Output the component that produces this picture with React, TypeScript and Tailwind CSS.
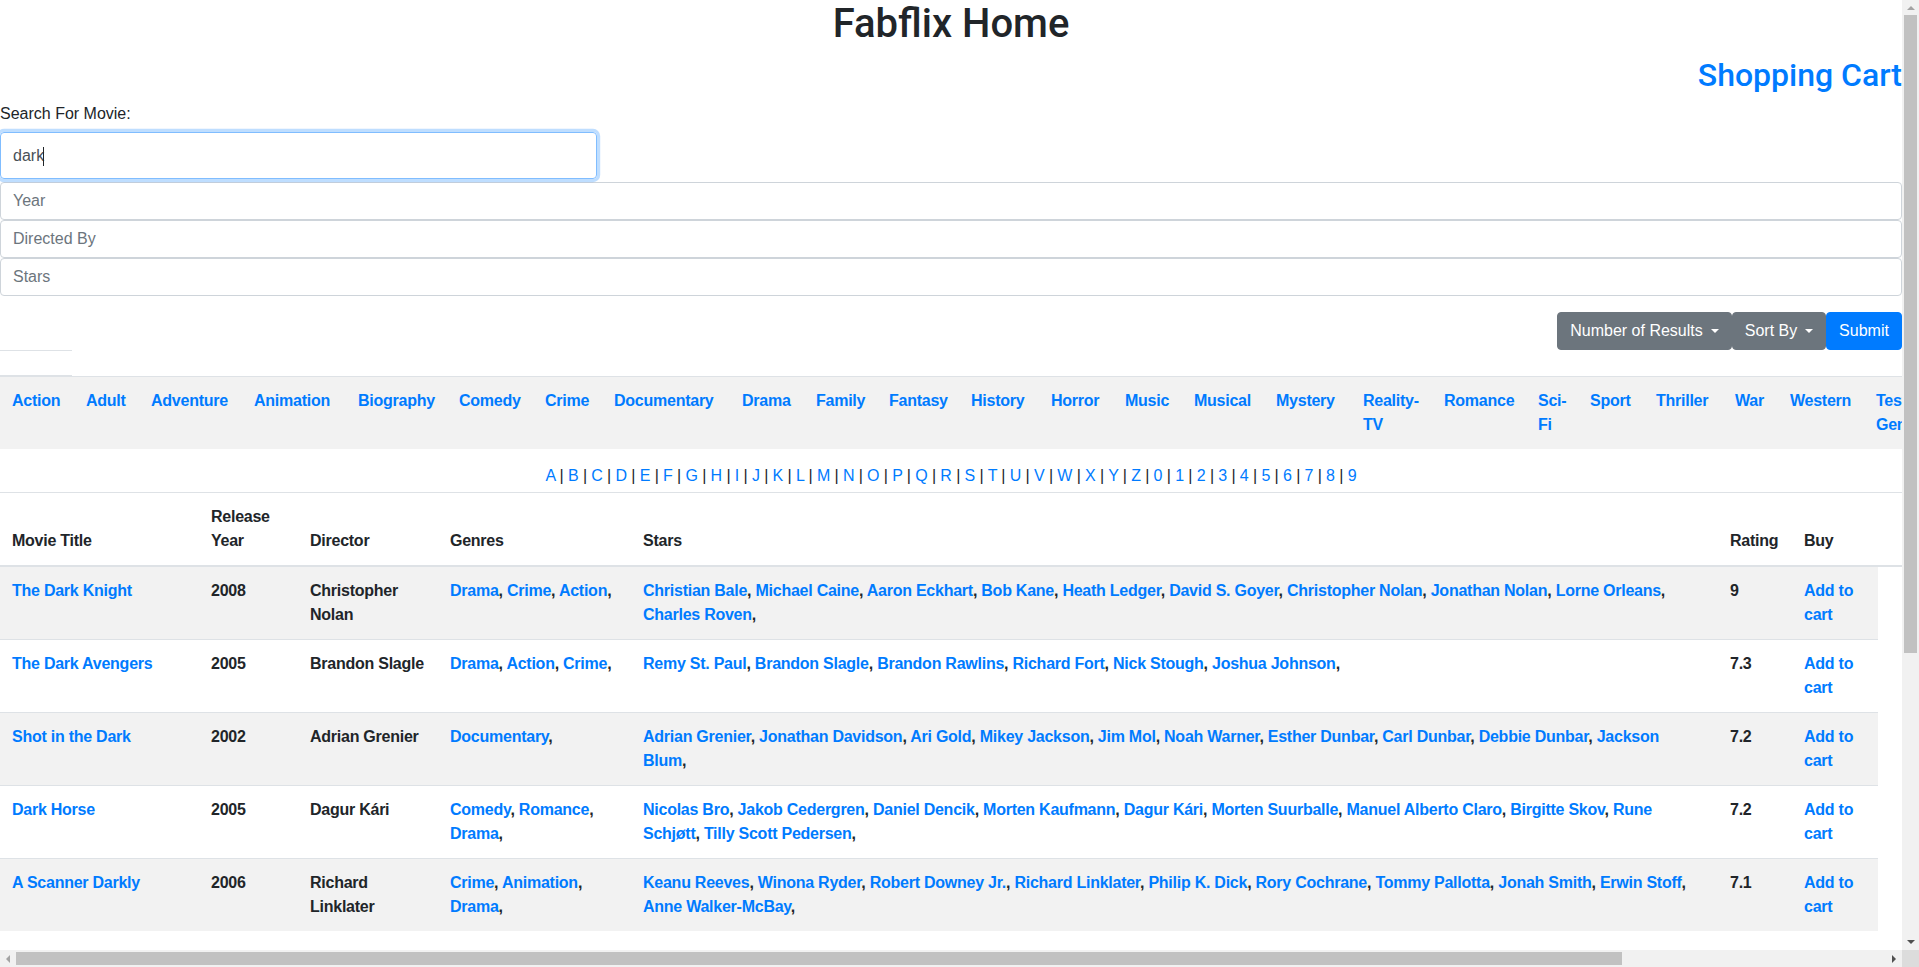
import { Fragment } from "react";

// column widths of the genre strip, taken from the reference layout
const genres = [
  { name: "Action", w: "w-[74px]" },
  { name: "Adult", w: "w-[65px]" },
  { name: "Adventure", w: "w-[103px]" },
  { name: "Animation", w: "w-[104px]" },
  { name: "Biography", w: "w-[101px]" },
  { name: "Comedy", w: "w-[86px]" },
  { name: "Crime", w: "w-[69px]" },
  { name: "Documentary", w: "w-[128px]" },
  { name: "Drama", w: "w-[74px]" },
  { name: "Family", w: "w-[73px]" },
  { name: "Fantasy", w: "w-[82px]" },
  { name: "History", w: "w-[80px]" },
  { name: "Horror", w: "w-[74px]" },
  { name: "Music", w: "w-[69px]" },
  { name: "Musical", w: "w-[82px]" },
  { name: "Mystery", w: "w-[87px]" },
  { name: "Reality-TV", w: "w-[81px]" },
  { name: "Romance", w: "w-[94px]" },
  { name: "Sci-Fi", w: "w-[52px]" },
  { name: "Sport", w: "w-[66px]" },
  { name: "Thriller", w: "w-[79px]" },
  { name: "War", w: "w-[55px]" },
  { name: "Western", w: "w-[86px]" },
  { name: "Test Genre", w: "w-[72px]" },
];

const initials = "ABCDEFGHIJKLMNOPQRSTUVWXYZ0123456789".split("");

type Movie = {
  title: string;
  year: string;
  director: string;
  genres: string[];
  stars: string[];
  rating: string;
};

const movies: Movie[] = [
  {
    title: "The Dark Knight",
    year: "2008",
    director: "Christopher Nolan",
    genres: ["Drama", "Crime", "Action"],
    stars: [
      "Christian Bale",
      "Michael Caine",
      "Aaron Eckhart",
      "Bob Kane",
      "Heath Ledger",
      "David S. Goyer",
      "Christopher Nolan",
      "Jonathan Nolan",
      "Lorne Orleans",
      "Charles Roven",
    ],
    rating: "9",
  },
  {
    title: "The Dark Avengers",
    year: "2005",
    director: "Brandon Slagle",
    genres: ["Drama", "Action", "Crime"],
    stars: ["Remy St. Paul", "Brandon Slagle", "Brandon Rawlins", "Richard Fort", "Nick Stough", "Joshua Johnson"],
    rating: "7.3",
  },
  {
    title: "Shot in the Dark",
    year: "2002",
    director: "Adrian Grenier",
    genres: ["Documentary"],
    stars: [
      "Adrian Grenier",
      "Jonathan Davidson",
      "Ari Gold",
      "Mikey Jackson",
      "Jim Mol",
      "Noah Warner",
      "Esther Dunbar",
      "Carl Dunbar",
      "Debbie Dunbar",
      "Jackson Blum",
    ],
    rating: "7.2",
  },
  {
    title: "Dark Horse",
    year: "2005",
    director: "Dagur Kári",
    genres: ["Comedy", "Romance", "Drama"],
    stars: [
      "Nicolas Bro",
      "Jakob Cedergren",
      "Daniel Dencik",
      "Morten Kaufmann",
      "Dagur Kári",
      "Morten Suurballe",
      "Manuel Alberto Claro",
      "Birgitte Skov",
      "Rune Schjøtt",
      "Tilly Scott Pedersen",
    ],
    rating: "7.2",
  },
  {
    title: "A Scanner Darkly",
    year: "2006",
    director: "Richard Linklater",
    genres: ["Crime", "Animation", "Drama"],
    stars: [
      "Keanu Reeves",
      "Winona Ryder",
      "Robert Downey Jr.",
      "Richard Linklater",
      "Philip K. Dick",
      "Rory Cochrane",
      "Tommy Pallotta",
      "Jonah Smith",
      "Erwin Stoff",
      "Anne Walker-McBay",
    ],
    rating: "7.1",
  },
];

function LinkList({ items }: { items: string[] }) {
  return (
    <>
      {items.map((item) => (
        <Fragment key={item}>
          <a href="#" className="text-[#007bff]">
            {item}
          </a>
          ,{" "}
        </Fragment>
      ))}
    </>
  );
}

function Caret() {
  return <span className="ml-2 inline-block border-x-[0.3em] border-t-[0.3em] border-b-0 border-x-transparent border-t-white" />;
}

// window scrollbars as they appear in the screenshot (classic Windows style)
function VerticalScrollbar() {
  return (
    <div className="flex flex-col bg-[#f1f1f1]">
      <div className="flex h-[15px] items-center justify-center">
        <span className="border-x-[4px] border-b-[4px] border-t-0 border-x-transparent border-b-[#a3a3a3]" />
      </div>
      <div className="mx-[2px] h-[638px] bg-[#c1c1c1]" />
      <div className="mt-auto flex h-[17px] items-center justify-center">
        <span className="border-x-[4px] border-t-[4px] border-b-0 border-x-transparent border-t-[#505050]" />
      </div>
    </div>
  );
}

function HorizontalScrollbar() {
  return (
    <div className="flex bg-[#f1f1f1]">
      <div className="flex w-[16px] items-center justify-center">
        <span className="border-y-[4px] border-r-[4px] border-l-0 border-y-transparent border-r-[#a3a3a3]" />
      </div>
      <div className="my-[2px] w-[1606px] bg-[#c1c1c1]" />
      <div className="ml-auto flex w-[17px] items-center justify-center">
        <span className="border-y-[4px] border-l-[4px] border-r-0 border-y-transparent border-l-[#505050]" />
      </div>
    </div>
  );
}

export default function App() {
  return (
    <div className="grid h-screen w-screen grid-cols-[minmax(0,1fr)_17px] grid-rows-[minmax(0,1fr)_17px] overflow-hidden bg-white">
      <main className="min-h-0 min-w-0 overflow-hidden font-['Liberation_Sans',Arial,sans-serif] text-base leading-6 text-[#212529]">
        <h1 className="mb-2 text-center font-['Roboto',sans-serif] text-[40px] leading-[1.2] font-medium">Fabflix Home</h1>
        <h2 className="mb-2 text-right font-['Roboto',sans-serif] text-[32px] leading-[1.2] font-medium">
          <a href="#" className="text-[#007bff]">
            Shopping Cart
          </a>
        </h2>

        <form onSubmit={(e) => e.preventDefault()}>
          <label className="block" htmlFor="title">
            Search For Movie:
          </label>
          <div className="relative mt-[6px] w-[597px]">
            <input
              id="title"
              defaultValue="dark"
              className="block h-[47px] w-full rounded border border-[#80bdff] px-3 text-[#495057] shadow-[0_0_0_3.2px_rgba(0,123,255,0.25)] outline-none"
            />
            {/* text cursor */}
            <span className="pointer-events-none absolute top-[15px] left-[43px] h-[19px] w-px bg-[#212529]" />
          </div>
          <input
            placeholder="Year"
            className="mt-[3px] block h-[38px] w-full rounded border border-[#ced4da] px-3 text-[#495057] outline-none placeholder:text-[#6c757d]"
          />
          <input
            placeholder="Directed By"
            className="block h-[38px] w-full rounded border border-[#ced4da] px-3 text-[#495057] outline-none placeholder:text-[#6c757d]"
          />
          <input
            placeholder="Stars"
            className="block h-[38px] w-full rounded border border-[#ced4da] px-3 text-[#495057] outline-none placeholder:text-[#6c757d]"
          />

          <div className="mt-4 flex justify-end">
            <button type="button" className="flex h-[38px] w-[175px] items-center justify-center rounded border border-[#6c757d] bg-[#6c757d] text-white">
              Number of Results
              <Caret />
            </button>
            <button type="button" className="flex h-[38px] w-[94px] items-center justify-center rounded border border-[#6c757d] bg-[#6c757d] text-white">
              Sort By
              <Caret />
            </button>
            <button type="submit" className="h-[38px] w-[76px] rounded border border-[#007bff] bg-[#007bff] text-white">
              Submit
            </button>
          </div>
        </form>

        <div className="h-[26px] w-[72px] border-y border-[#dee2e6]" />

        <table className="w-[2211px] table-fixed font-bold tracking-[-0.25px]">
          <colgroup>
            {genres.map((g) => (
              <col key={g.name} className={g.w} />
            ))}
            <col className="w-[275px]" />
          </colgroup>
          <tbody>
            <tr className="bg-[#f2f2f2]">
              {genres.map((g) => (
                <td key={g.name} className="border-t border-[#dee2e6] p-3 align-top">
                  <a href="#" className="text-[#007bff]">
                    {g.name}
                  </a>
                </td>
              ))}
              <td className="border-t border-[#dee2e6] p-3" />
            </tr>
          </tbody>
        </table>

        <div className="pt-[15px] pb-1 text-center tracking-[-0.1px]">
          {initials.map((c, i) => (
            <Fragment key={c}>
              <a href="#" className="text-[#007bff]">
                {c}
              </a>
              {i < initials.length - 1 ? " | " : ""}
            </Fragment>
          ))}
        </div>

        <table className="w-full table-fixed font-bold tracking-[-0.25px]">
          <colgroup>
            <col className="w-[199px]" />
            <col className="w-[99px]" />
            <col className="w-[140px]" />
            <col className="w-[193px]" />
            <col className="w-[1087px]" />
            <col className="w-[74px]" />
            <col className="w-[86px]" />
            <col className="w-[24px]" />
          </colgroup>
          <thead>
            <tr className="text-left">
              <th className="border-t border-b-2 border-[#dee2e6] p-3 align-bottom">Movie Title</th>
              <th className="border-t border-b-2 border-[#dee2e6] p-3 align-bottom">Release Year</th>
              <th className="border-t border-b-2 border-[#dee2e6] p-3 align-bottom">Director</th>
              <th className="border-t border-b-2 border-[#dee2e6] p-3 align-bottom">Genres</th>
              <th className="border-t border-b-2 border-[#dee2e6] p-3 align-bottom">Stars</th>
              <th className="border-t border-b-2 border-[#dee2e6] p-3 align-bottom">Rating</th>
              <th className="border-t border-b-2 border-[#dee2e6] p-3 align-bottom">Buy</th>
              <th className="border-t border-b-2 border-[#dee2e6] p-3 align-bottom" />
            </tr>
          </thead>
          <tbody>
            {movies.map((m, i) => {
              const cell = `border-t border-[#dee2e6] p-3 align-top ${i % 2 === 0 ? "bg-[#f2f2f2]" : "bg-white"}`;
              return (
                <tr key={m.title}>
                  <td className={cell}>
                    <a href="#" className="text-[#007bff]">
                      {m.title}
                    </a>
                  </td>
                  <td className={cell}>{m.year}</td>
                  <td className={cell}>{m.director}</td>
                  <td className={cell}>
                    <LinkList items={m.genres} />
                  </td>
                  <td className={cell}>
                    <LinkList items={m.stars} />
                  </td>
                  <td className={cell}>{m.rating}</td>
                  <td className={cell}>
                    <a href="#" className="text-[#007bff]">
                      Add to cart
                    </a>
                  </td>
                </tr>
              );
            })}
          </tbody>
        </table>
      </main>
      <VerticalScrollbar />
      <HorizontalScrollbar />
      <div className="bg-[#dcdcdc]" />
    </div>
  );
}
